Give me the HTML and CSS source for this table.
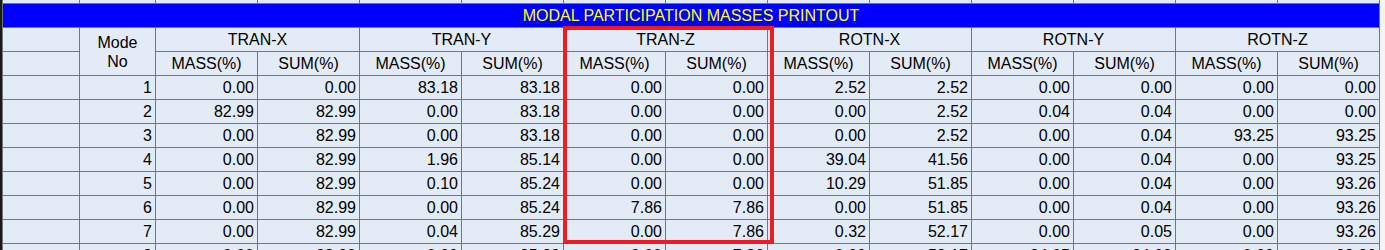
FILE: index.html
```html
<!DOCTYPE html>
<html lang="en">
<head>
<meta charset="utf-8">
<title>Modal Participation Masses Printout</title>
<link rel="stylesheet" href="styles.css">
</head>
<body>
<div class="sheet">
  <div class="rowbar"></div>
  <div class="grid">
    <div class="c"></div><div class="c"></div><div class="c"></div><div class="c"></div><div class="c"></div><div class="c"></div><div class="c"></div><div class="c"></div><div class="c"></div><div class="c"></div><div class="c"></div><div class="c"></div><div class="c"></div><div class="c"></div>

    <div class="c title">MODAL PARTICIPATION MASSES PRINTOUT</div>

    <div class="c"></div>
    <div class="c mode">Mode<br>No</div>
    <div class="c hd grp">TRAN-X</div>
    <div class="c hd grp">TRAN-Y</div>
    <div class="c hd grp">TRAN-Z</div>
    <div class="c hd grp">ROTN-X</div>
    <div class="c hd grp">ROTN-Y</div>
    <div class="c hd grp">ROTN-Z</div>

    <div class="c"></div>
    <div class="c hd">MASS(%)</div><div class="c hd">SUM(%)</div>
    <div class="c hd">MASS(%)</div><div class="c hd">SUM(%)</div>
    <div class="c hd">MASS(%)</div><div class="c hd">SUM(%)</div>
    <div class="c hd">MASS(%)</div><div class="c hd">SUM(%)</div>
    <div class="c hd">MASS(%)</div><div class="c hd">SUM(%)</div>
    <div class="c hd">MASS(%)</div><div class="c hd">SUM(%)</div>

    <div class="c"></div><div class="c n">1</div>
    <div class="c n">0.00</div><div class="c n">0.00</div>
    <div class="c n">83.18</div><div class="c n">83.18</div>
    <div class="c n">0.00</div><div class="c n">0.00</div>
    <div class="c n">2.52</div><div class="c n">2.52</div>
    <div class="c n">0.00</div><div class="c n">0.00</div>
    <div class="c n">0.00</div><div class="c n">0.00</div>

    <div class="c"></div><div class="c n">2</div>
    <div class="c n">82.99</div><div class="c n">82.99</div>
    <div class="c n">0.00</div><div class="c n">83.18</div>
    <div class="c n">0.00</div><div class="c n">0.00</div>
    <div class="c n">0.00</div><div class="c n">2.52</div>
    <div class="c n">0.04</div><div class="c n">0.04</div>
    <div class="c n">0.00</div><div class="c n">0.00</div>

    <div class="c"></div><div class="c n">3</div>
    <div class="c n">0.00</div><div class="c n">82.99</div>
    <div class="c n">0.00</div><div class="c n">83.18</div>
    <div class="c n">0.00</div><div class="c n">0.00</div>
    <div class="c n">0.00</div><div class="c n">2.52</div>
    <div class="c n">0.00</div><div class="c n">0.04</div>
    <div class="c n">93.25</div><div class="c n">93.25</div>

    <div class="c"></div><div class="c n">4</div>
    <div class="c n">0.00</div><div class="c n">82.99</div>
    <div class="c n">1.96</div><div class="c n">85.14</div>
    <div class="c n">0.00</div><div class="c n">0.00</div>
    <div class="c n">39.04</div><div class="c n">41.56</div>
    <div class="c n">0.00</div><div class="c n">0.04</div>
    <div class="c n">0.00</div><div class="c n">93.25</div>

    <div class="c"></div><div class="c n">5</div>
    <div class="c n">0.00</div><div class="c n">82.99</div>
    <div class="c n">0.10</div><div class="c n">85.24</div>
    <div class="c n">0.00</div><div class="c n">0.00</div>
    <div class="c n">10.29</div><div class="c n">51.85</div>
    <div class="c n">0.00</div><div class="c n">0.04</div>
    <div class="c n">0.00</div><div class="c n">93.26</div>

    <div class="c"></div><div class="c n">6</div>
    <div class="c n">0.00</div><div class="c n">82.99</div>
    <div class="c n">0.00</div><div class="c n">85.24</div>
    <div class="c n">7.86</div><div class="c n">7.86</div>
    <div class="c n">0.00</div><div class="c n">51.85</div>
    <div class="c n">0.00</div><div class="c n">0.04</div>
    <div class="c n">0.00</div><div class="c n">93.26</div>

    <div class="c"></div><div class="c n">7</div>
    <div class="c n">0.00</div><div class="c n">82.99</div>
    <div class="c n">0.04</div><div class="c n">85.29</div>
    <div class="c n">0.00</div><div class="c n">7.86</div>
    <div class="c n">0.32</div><div class="c n">52.17</div>
    <div class="c n">0.00</div><div class="c n">0.05</div>
    <div class="c n">0.00</div><div class="c n">93.26</div>

    <div class="c"></div><div class="c n">8</div>
    <div class="c n">0.00</div><div class="c n">82.99</div>
    <div class="c n">0.00</div><div class="c n">85.29</div>
    <div class="c n">0.00</div><div class="c n">7.86</div>
    <div class="c n">0.00</div><div class="c n">52.17</div>
    <div class="c n">24.05</div><div class="c n">24.09</div>
    <div class="c n">0.00</div><div class="c n">93.26</div>
  </div>
  <div class="highlight"></div>
</div>
</body>
</html>
```

FILE: styles.css
```css
html, body {
  margin: 0;
  padding: 0;
  overflow: hidden;
  background: #f4f4f4;
}

.sheet {
  position: relative;
  display: flex;
  align-items: flex-start;
  height: 250px;
  overflow: hidden;
  font-family: "Liberation Sans", Arial, sans-serif;
  font-size: 16px;
  color: #000;
}

.rowbar {
  width: 2px;
  height: 270px;
  background: #1b1b1b;
  flex: none;
}

.grid {
  display: grid;
  grid-template-columns: 76px 75px repeat(12, 101px);
  grid-template-rows: 3px repeat(11, 23px);
  gap: 1px;
  padding: 0 1px 0 1px;
  background: #767676;
  flex: none;
}

.c {
  background: #e3ebf6;
  line-height: 23px;
  white-space: nowrap;
  overflow: hidden;
}

.title {
  grid-column: 1 / -1;
  background: #0000ff;
  color: #ffff00;
  text-align: center;
}

.mode {
  grid-row: span 2;
  display: flex;
  align-items: center;
  justify-content: center;
  text-align: center;
  line-height: 19px;
  padding-top: 1px;
}

.hd {
  text-align: center;
}

.grp {
  grid-column: span 2;
}

.n {
  text-align: right;
  padding-right: 3px;
}

.highlight {
  position: absolute;
  left: 563px;
  top: 26px;
  width: 211px;
  height: 218px;
  box-sizing: border-box;
  border: 4px solid #ed1c24;
}
```
